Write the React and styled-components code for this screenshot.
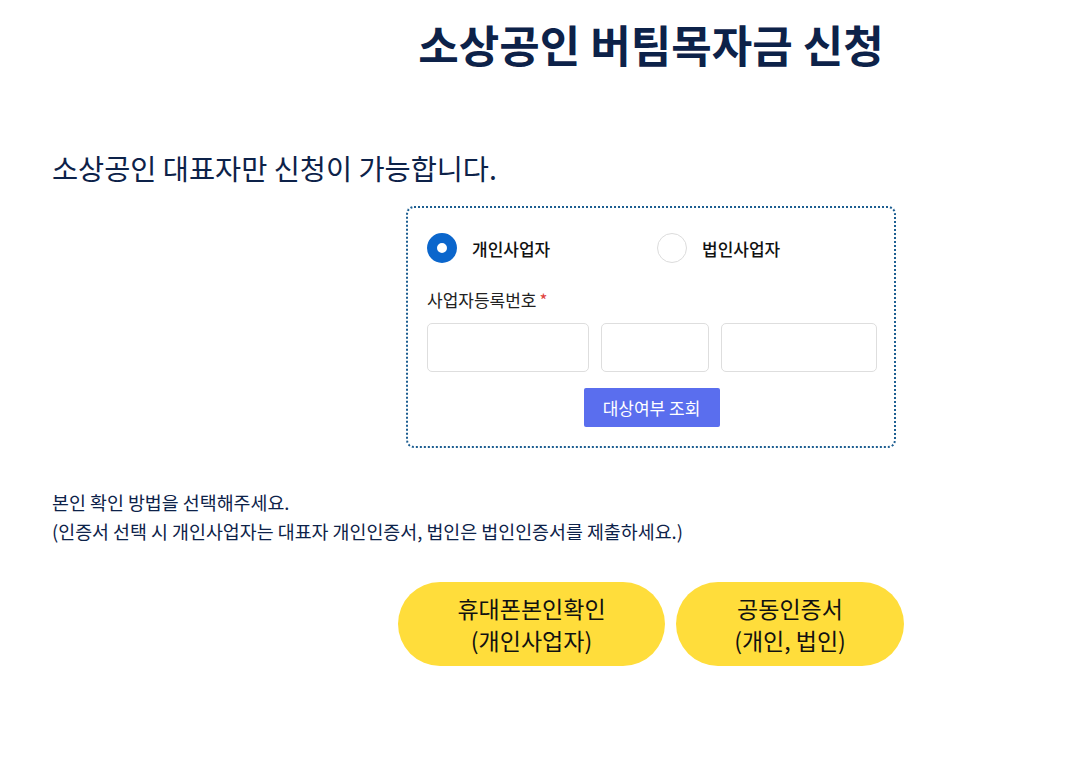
import React, { useState } from 'react';
import styled, { createGlobalStyle } from 'styled-components';

const GlobalStyle = createGlobalStyle`
  html, body {
    margin: 0;
    padding: 0;
    background: #fff;
  }
  body {
    font-family: "Noto Sans CJK KR", "Noto Sans", sans-serif;
  }
`;

const Viewport = styled.div`
  width: 100%;
  overflow: hidden;
`;

const Page = styled.div`
  width: 1198px;
  margin-left: 52px;
  padding: 14px 0 40px;
  display: flex;
  flex-direction: column;
`;

const Title = styled.h1`
  margin: 0;
  text-align: center;
  font-size: 44px;
  font-weight: 700;
  color: #0d2249;
  line-height: 60px;
`;

const Lead = styled.h2`
  margin: 76px 0 0;
  font-size: 28.4px;
  font-weight: 400;
  color: #0d2249;
  line-height: 36px;
`;

const Card = styled.div`
  align-self: center;
  width: 490px;
  box-sizing: border-box;
  margin-top: 20px;
  padding: 25px 18px 19px 19px;
  border: 2px dotted #1d5e91;
  border-radius: 8px;
`;

const RadioRow = styled.div`
  display: flex;
`;

const RadioItem = styled.label`
  flex: 0 0 230px;
  display: flex;
  align-items: center;
  gap: 15px;
  font-size: 17px;
  font-weight: 500;
  color: #111;
  cursor: pointer;
`;

const RadioDot = styled.span`
  width: 30px;
  height: 30px;
  border-radius: 50%;
  box-sizing: border-box;
  background: #fff;
  border: ${p => (p.$checked ? '10px solid #0b66cc' : '1px solid #dcdcdc')};
`;

const FieldLabel = styled.div`
  margin-top: 24px;
  font-size: 17px;
  color: #222;
  line-height: 26px;
  span {
    color: #e0413c;
    margin-left: 3px;
  }
`;

const InputRow = styled.div`
  margin-top: 10px;
  display: flex;
  gap: 12px;
`;

const Input = styled.input`
  width: ${p => p.$w}px;
  height: 49px;
  box-sizing: border-box;
  border: 1px solid #dedede;
  border-radius: 5px;
  outline: none;
  padding: 0 10px;
  font-size: 16px;
`;

const CheckButton = styled.button`
  display: block;
  margin: 16px auto 0;
  width: 136px;
  height: 39px;
  border: none;
  border-radius: 2px;
  background: #5a6eee;
  color: #fff;
  font-family: inherit;
  font-size: 17px;
  cursor: pointer;
`;

const Notice = styled.p`
  margin: 40px 0 0;
  font-size: 18.4px;
  line-height: 29px;
  color: #0d2249;
`;

const AuthRow = styled.div`
  align-self: center;
  margin-top: 36px;
  display: flex;
  gap: 11px;
`;

const AuthButton = styled.button`
  width: ${p => p.$w}px;
  height: 84px;
  border: none;
  border-radius: 42px;
  background: #ffdd3b;
  color: #111;
  font-family: inherit;
  font-size: 23px;
  line-height: 32px;
  cursor: pointer;
`;

export default function App() {
  const [type, setType] = useState('personal');
  return (
    <Viewport>
      <GlobalStyle />
      <Page>
        <Title>소상공인 버팀목자금 신청</Title>
        <Lead>소상공인 대표자만 신청이 가능합니다.</Lead>
        <Card>
          <RadioRow>
            <RadioItem onClick={() => setType('personal')}>
              <RadioDot $checked={type === 'personal'} />
              개인사업자
            </RadioItem>
            <RadioItem onClick={() => setType('corp')}>
              <RadioDot $checked={type === 'corp'} />
              법인사업자
            </RadioItem>
          </RadioRow>
          <FieldLabel>
            사업자등록번호<span>*</span>
          </FieldLabel>
          <InputRow>
            <Input $w={162} />
            <Input $w={108} />
            <Input $w={156} />
          </InputRow>
          <CheckButton>대상여부 조회</CheckButton>
        </Card>
        <Notice>
          본인 확인 방법을 선택해주세요.
          <br />
          (인증서 선택 시 개인사업자는 대표자 개인인증서, 법인은 법인인증서를 제출하세요.)
        </Notice>
        <AuthRow>
          <AuthButton $w={267}>
            휴대폰본인확인
            <br />
            (개인사업자)
          </AuthButton>
          <AuthButton $w={228}>
            공동인증서
            <br />
            (개인, 법인)
          </AuthButton>
        </AuthRow>
      </Page>
    </Viewport>
  );
}
